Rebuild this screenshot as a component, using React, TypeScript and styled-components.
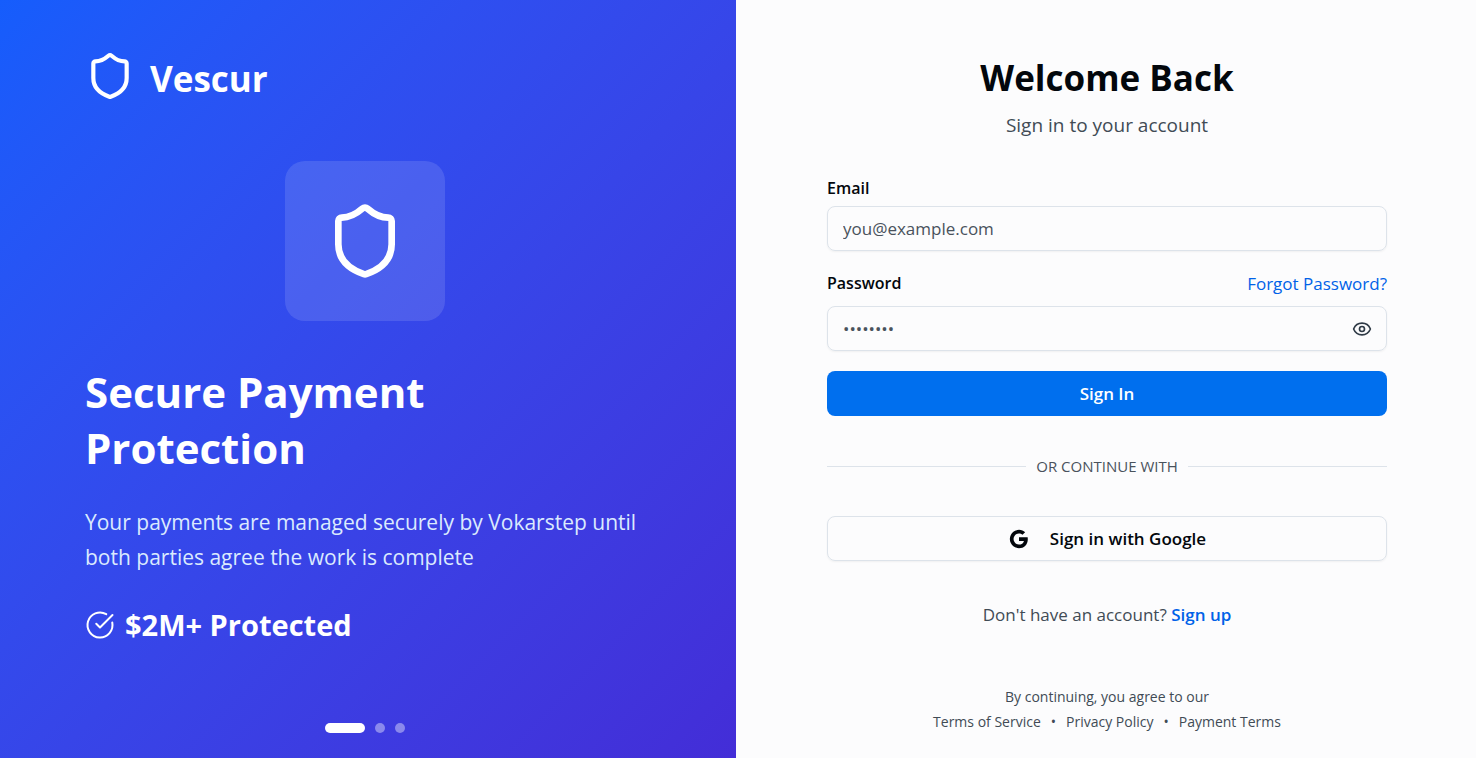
import React from "react";
import styled, { createGlobalStyle } from "styled-components";
import { Shield, CircleCheckBig, Eye } from "lucide-react";
import { RiGoogleFill } from "react-icons/ri";

const GlobalStyle = createGlobalStyle`
  *, *::before, *::after { box-sizing: border-box; }
  body {
    margin: 0;
    background: #fcfcfd;
    color: #03070c;
    font-family: "Segoe UI", "Open Sans", "Noto Sans", sans-serif;
    font-size: 17px;
    line-height: 25px;
  }
  h1, h2, p { margin: 0; }
  a { color: inherit; text-decoration: none; }
  button, input { font: inherit; color: inherit; }
`;

const Page = styled.div`
  display: grid;
  grid-template-columns: 1fr 1fr;
  min-height: 100vh;
`;

const Showcase = styled.section`
  display: flex;
  flex-direction: column;
  align-items: center;
  margin-right: 2px;
  padding: 51px 60px 25px 54px;
  color: #fff;
  background: linear-gradient(to bottom right in oklab, #155dfc, #432dd7);
`;

const ShowcaseBody = styled.div`
  display: flex;
  flex-direction: column;
  flex: 1;
  width: 100%;
  max-width: 560px;
`;

const Brand = styled.div`
  display: flex;
  align-items: flex-start;
  gap: 15px;
  margin-bottom: 54px;
  font-size: 35px;
  font-weight: 700;
  line-height: 56px;
`;

const Emblem = styled.div`
  display: grid;
  place-items: center;
  align-self: center;
  width: 160px;
  height: 160px;
  margin-bottom: 43px;
  border-radius: 20px;
  background: rgba(255, 255, 255, 0.12);
`;

const Headline = styled.h2`
  max-width: 420px;
  margin-bottom: 29px;
  font-size: 42px;
  font-weight: 700;
  line-height: 56px;
`;

const Pitch = styled.p`
  margin-bottom: 30px;
  color: #dbeafe;
  font-size: 21px;
  line-height: 35px;
`;

const Stat = styled.p`
  display: flex;
  align-items: center;
  gap: 10px;
  font-size: 29px;
  font-weight: 700;
  line-height: 40px;
`;

const Pager = styled.div`
  display: flex;
  justify-content: center;
  gap: 10px;
  margin-top: auto;
`;

const PagerDot = styled.button<{ $active?: boolean }>`
  width: ${(p) => (p.$active ? 40 : 10)}px;
  height: 10px;
  padding: 0;
  border: 0;
  border-radius: 5px;
  background: ${(p) => (p.$active ? "#fff" : "rgba(255, 255, 255, 0.4)")};
`;

const Main = styled.main`
  display: flex;
  flex-direction: column;
  align-items: center;
  padding: 50px 60px 24px;
`;

const Panel = styled.div`
  width: 100%;
  max-width: 560px;
`;

const Header = styled.header`
  margin-bottom: 37px;
  text-align: center;
`;

const Title = styled.h1`
  margin-bottom: 5px;
  font-size: 35px;
  font-weight: 700;
  line-height: 56px;
`;

const Subtitle = styled.p`
  color: #414b55;
  font-size: 19px;
  line-height: 28px;
`;

const Form = styled.form`
  display: flex;
  flex-direction: column;
  gap: 20px;
`;

const Field = styled.div<{ $gap: number }>`
  display: flex;
  flex-direction: column;
  gap: ${(p) => p.$gap}px;
`;

const FieldHead = styled.div`
  display: flex;
  justify-content: space-between;
`;

const Label = styled.label`
  font-size: 16px;
  font-weight: 600;
`;

const TextLink = styled.a<{ $strong?: boolean }>`
  color: #0062e8;
  font-weight: ${(p) => (p.$strong ? 600 : 400)};
`;

const InputBox = styled.div`
  display: flex;
  align-items: center;
  height: 45px;
  padding: 0 14px 0 15px;
  border: 1px solid #dde3ea;
  border-radius: 8px;
  box-shadow: 0 1px 2px rgba(0, 0, 0, 0.05);
`;

const Input = styled.input`
  flex: 1;
  min-width: 0;
  padding: 0;
  border: 0;
  outline: 0;
  background: transparent;
  &::placeholder { color: #49525c; opacity: 1; }
`;

const IconButton = styled.button`
  display: flex;
  padding: 0;
  border: 0;
  background: none;
  color: #2f3a46;
`;

const Button = styled.button<{ $primary?: boolean }>`
  display: flex;
  align-items: center;
  justify-content: center;
  gap: 20px;
  width: 100%;
  height: 45px;
  border: ${(p) => (p.$primary ? "0" : "1px solid #dde3ea")};
  border-radius: 8px;
  background: ${(p) => (p.$primary ? "#006fee" : "transparent")};
  color: ${(p) => (p.$primary ? "#fff" : "#03070c")};
  box-shadow: ${(p) => (p.$primary ? "none" : "0 1px 2px rgba(0, 0, 0, 0.05)")};
  font-size: 17px;
  font-weight: 600;
`;

const Divider = styled.div`
  display: flex;
  align-items: center;
  gap: 10px;
  margin: 38px 0 37px;
  color: #49525c;
  font-size: 15px;
  text-transform: uppercase;
  &::before, &::after {
    content: "";
    flex: 1;
    height: 1px;
    background: #dde3ea;
  }
`;

const SignUp = styled.p`
  margin: 41px 0 57px;
  color: #414b55;
  text-align: center;
`;

const Legal = styled.footer`
  color: #414b55;
  font-size: 14px;
  text-align: center;
`;

const LegalLinks = styled.nav`
  display: flex;
  justify-content: center;
  gap: 10px;
`;

export default function App() {
  return (
    <>
      <GlobalStyle />
      <Page>
        <Showcase>
          <ShowcaseBody>
            <Brand>
              <Shield size={50} />
              <span>Vescur</span>
            </Brand>
            <Emblem>
              <Shield size={80} />
            </Emblem>
            <Headline>Secure Payment Protection</Headline>
            <Pitch>
              Your payments are managed securely by Vokarstep until both parties agree the work is complete
            </Pitch>
            <Stat>
              <CircleCheckBig size={30} strokeWidth={1.6} />
              <span>$2M+ Protected</span>
            </Stat>
            <Pager>
              <PagerDot type="button" aria-label="Slide 1" $active />
              <PagerDot type="button" aria-label="Slide 2" />
              <PagerDot type="button" aria-label="Slide 3" />
            </Pager>
          </ShowcaseBody>
        </Showcase>
        <Main>
          <Panel>
            <Header>
              <Title>Welcome Back</Title>
              <Subtitle>Sign in to your account</Subtitle>
            </Header>
            <Form>
              <Field $gap={5}>
                <Label htmlFor="email">Email</Label>
                <InputBox>
                  <Input id="email" type="email" placeholder="you@example.com" />
                </InputBox>
              </Field>
              <Field $gap={10}>
                <FieldHead>
                  <Label htmlFor="password">Password</Label>
                  <TextLink href="#forgot">Forgot Password?</TextLink>
                </FieldHead>
                <InputBox>
                  <Input id="password" type="password" placeholder="••••••••" />
                  <IconButton type="button" aria-label="Show password">
                    <Eye size={20} />
                  </IconButton>
                </InputBox>
              </Field>
              <Button type="submit" $primary>
                Sign In
              </Button>
            </Form>
            <Divider>Or continue with</Divider>
            <Button type="button">
              <RiGoogleFill size={22} />
              <span>Sign in with Google</span>
            </Button>
            <SignUp>
              Don't have an account?{" "}
              <TextLink href="#signup" $strong>
                Sign up
              </TextLink>
            </SignUp>
            <Legal>
              <p>By continuing, you agree to our</p>
              <LegalLinks>
                <a href="#terms">Terms of Service</a>
                <span>•</span>
                <a href="#privacy">Privacy Policy</a>
                <span>•</span>
                <a href="#payment">Payment Terms</a>
              </LegalLinks>
            </Legal>
          </Panel>
        </Main>
      </Page>
    </>
  );
}
